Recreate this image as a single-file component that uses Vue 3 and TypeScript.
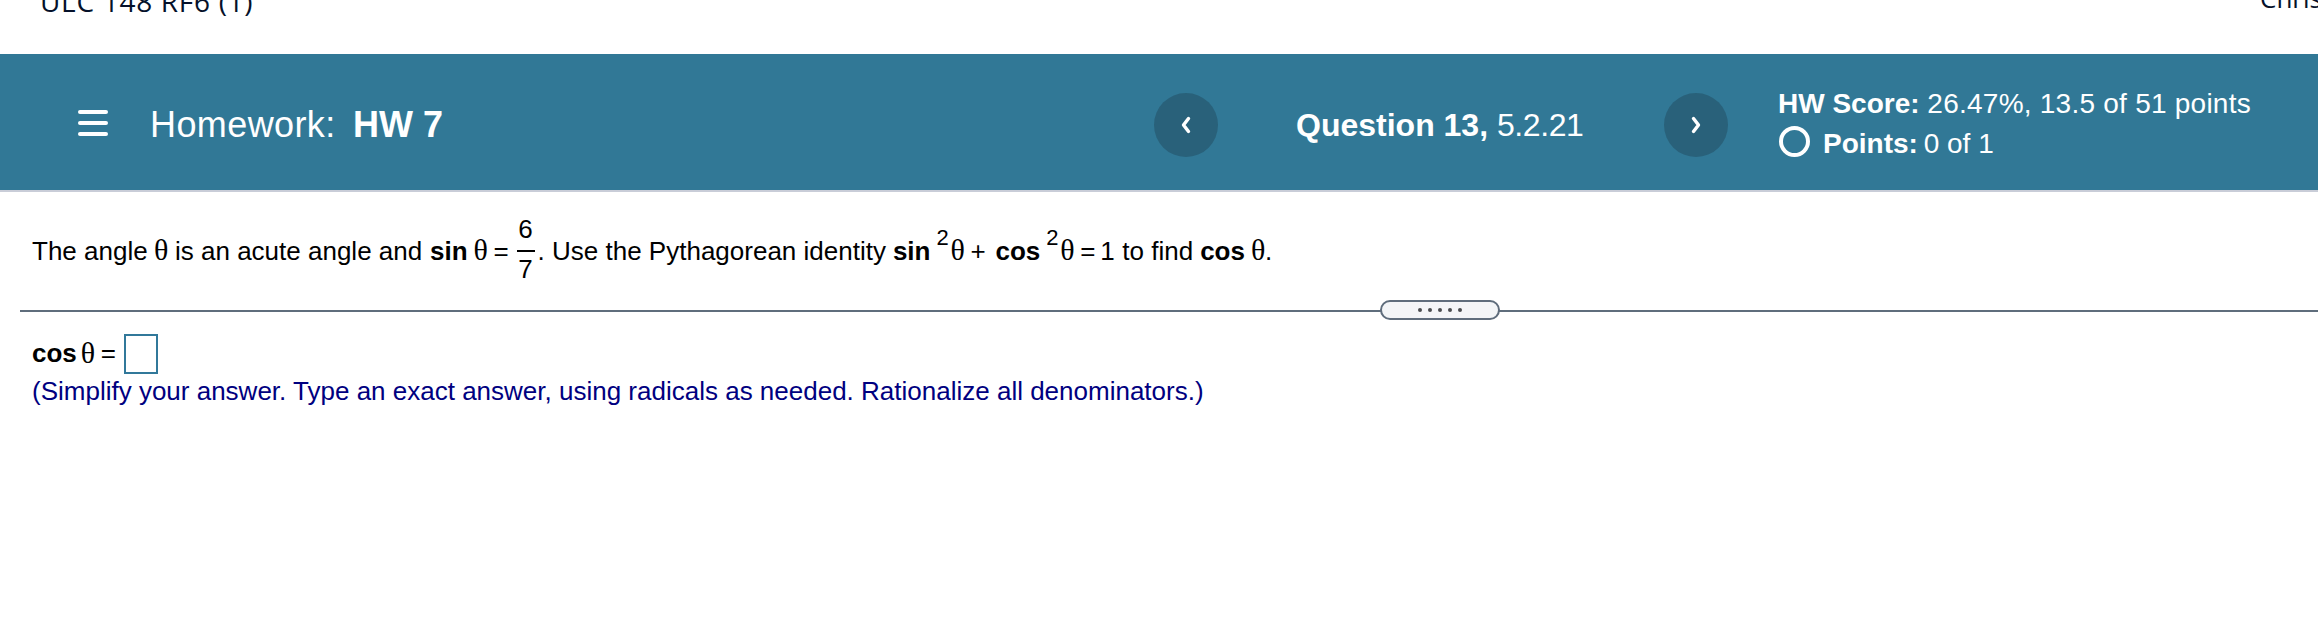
<script setup lang="ts">
import { ref } from "vue";

const courseName = "ULC 148 RF6 (1)";
const userName = "Chris";

const homework = ref({ label: "Homework:", name: "HW 7" });
const question = ref({ number: 13, section: "5.2.21" });
const score = ref({ percent: "26.47%", earned: 13.5, total: 51 });
const points = ref({ earned: 0, total: 1 });

const answer = ref("");
const HANDLE_DOTS = 5;
</script>

<template>
  <div class="page">
    <div class="topbar">
      <span class="course">{{ courseName }}</span>
      <span class="user">{{ userName }}</span>
    </div>

    <header class="header">
      <button class="menu" aria-label="Menu">
        <span class="menuLine"></span>
        <span class="menuLine"></span>
        <span class="menuLine"></span>
      </button>
      <h1 class="title">
        <span class="titleLabel">{{ homework.label }}</span>
        <b>{{ homework.name }}</b>
      </h1>

      <nav class="questionNav">
        <button class="round" aria-label="Previous question">
          <svg width="14" height="20" viewBox="0 0 14 20">
            <path d="M9.5 3.5 L4.5 10 L9.5 16.5" />
          </svg>
        </button>
        <div class="question"><b>Question {{ question.number }},</b> <span class="section">{{ question.section }}</span></div>
        <button class="round" aria-label="Next question">
          <svg width="14" height="20" viewBox="0 0 14 20">
            <path d="M4.5 3.5 L9.5 10 L4.5 16.5" />
          </svg>
        </button>
      </nav>

      <div class="score">
        <div class="scoreLine">
          <b>HW Score:</b> <span class="hwValue">{{ score.percent }}, {{ score.earned }} of {{ score.total }} points</span>
        </div>
        <div class="scoreLine pointsLine">
          <span class="ring"></span>
          <span><b class="pointsLabel">Points:</b> {{ points.earned }} of {{ points.total }}</span>
        </div>
      </div>
    </header>

    <main class="content">
      <div class="prompt">
        <span class="leadText">The angle</span>
        <span class="theta first">θ</span>
        <span class="middleText">is an acute angle and</span>
        <b class="fn">sin</b>
        <span class="theta">θ</span>
        <span class="op">=</span>
        <span class="fraction">
          <span class="numerator">6</span>
          <span class="bar"></span>
          <span class="denominator">7</span>
        </span>
        <span class="useText">. Use the Pythagorean identity</span>
        <b class="fn">sin</b>
        <sup class="power">2</sup>
        <span class="theta squared">θ</span>
        <span class="op">+</span>
        <b class="fn afterPlus">cos</b>
        <sup class="power">2</sup>
        <span class="theta squared">θ</span>
        <span class="op">=</span>
        <span class="one">1</span>
        <span class="findText">to find</span>
        <b class="fn">cos</b>
        <span class="theta last">θ</span>
        <span>.</span>
      </div>

      <div class="divider">
        <div class="handle">
          <i v-for="n in HANDLE_DOTS" :key="n" class="dot"></i>
        </div>
      </div>

      <div class="answer">
        <b>cos</b>
        <span class="theta">θ</span>
        <span class="op">=</span>
        <input v-model="answer" class="answerBox" aria-label="Answer" />
      </div>
      <p class="hint">(Simplify your answer. Type an exact answer, using radicals as needed. Rationalize all denominators.)</p>
    </main>
  </div>
</template>

<style>
body {
  margin: 0;
  background: #fff;
}
</style>

<style scoped>
.page {
  width: 100%;
  height: 644px;
  overflow: hidden;
  font-family: "Liberation Sans", Arial, sans-serif;
  color: #000;
}

button {
  padding: 0;
  border: 0;
  background: none;
}

/* top bar */
.topbar {
  display: flex;
  justify-content: space-between;
  height: 54px;
  font-family: "Open Sans", sans-serif;
  font-weight: 500;
  color: #05112a;
  white-space: nowrap;
}

.course {
  margin: -19px 0 0 40px;
  font-size: 28px;
  line-height: 40px;
  letter-spacing: 0.7px;
}

.user {
  width: 58px;
  margin-top: -22px;
  font-size: 26px;
  line-height: 40px;
  overflow: hidden;
}

/* header */
.header {
  display: flex;
  align-items: center;
  height: 138px;
  padding: 5px 0 0 78px;
  box-sizing: border-box;
  border-bottom: 2px solid #c9cdd8;
  background: #317896;
  color: #fff;
  white-space: nowrap;
}

.menu {
  display: flex;
  flex-direction: column;
  gap: 7px;
  width: 30px;
  margin-bottom: 3px;
}

.menuLine {
  height: 4px;
  border-radius: 2px;
  background: #fff;
}

.title {
  display: flex;
  width: 1004px;
  margin: 0 0 0 42px;
  padding-top: 1px;
  font-size: 36px;
  font-weight: 400;
  line-height: 42px;
}

.titleLabel {
  width: 203px;
  letter-spacing: 0.4px;
}

.questionNav {
  display: flex;
  align-items: center;
  width: 575px;
}

.round {
  display: flex;
  align-items: center;
  justify-content: center;
  width: 64px;
  height: 64px;
  border-radius: 50%;
  background: #29617a;
}

.round path {
  fill: none;
  stroke: #fff;
  stroke-width: 3.4;
  stroke-linecap: round;
  stroke-linejoin: round;
}

.question {
  width: 368px;
  padding-left: 78px;
  font-size: 32px;
  line-height: 40px;
}

.section {
  letter-spacing: -0.4px;
}

.score {
  margin: -1px 0 0 49px;
  font-size: 28px;
  line-height: 40px;
}

.hwValue {
  letter-spacing: 0.24px;
}

.pointsLine {
  display: flex;
  align-items: center;
}

.pointsLabel {
  margin-right: -2px;
}

.ring {
  width: 31px;
  height: 31px;
  margin: 0 13px 5px 1px;
  border: 4px solid #fff;
  border-radius: 50%;
  box-sizing: border-box;
}

/* exercise */
.content {
  font-size: 26px;
  line-height: 30px;
}

.prompt {
  display: flex;
  align-items: center;
  height: 118px;
  padding-left: 32px;
  white-space: nowrap;
}

.leadText {
  width: 115px;
}

.theta {
  width: 14px;
  margin: 0 6px;
  padding-bottom: 3px;
  font-family: "Liberation Serif", serif;
  font-size: 30px;
}

.theta.first {
  margin: 0 7px;
}

.middleText {
  width: 248px;
  margin-right: 7px;
}

.fn {
  padding-bottom: 1px;
}

.op {
  width: 15px;
}

.fraction {
  display: flex;
  flex-direction: column;
  align-items: center;
  width: 18px;
  margin: 0 3px 4px 8px;
}

.fraction span {
  line-height: 38px;
}

.fraction .numerator {
  margin-bottom: 2px;
}

.fraction .denominator {
  margin-top: -2px;
}

.fraction .bar {
  width: 100%;
  height: 2px;
  background: #000;
}

.useText {
  margin-right: 7px;
}

.power {
  width: 12px;
  margin: 0 2px 0 6px;
  padding-bottom: 27px;
  font-size: 22px;
  line-height: 24px;
}

.theta.squared {
  margin-left: 0;
}

.afterPlus {
  margin-left: 10px;
}

.one {
  width: 15px;
  margin-left: 5px;
}

.findText {
  margin: 0 7px 0 7px;
}

.theta.last {
  margin-right: 0;
}

.divider {
  display: flex;
  align-items: center;
  height: 2px;
  margin-left: 20px;
  background: #5f6d7c;
}

.handle {
  display: flex;
  align-items: center;
  justify-content: center;
  gap: 6px;
  flex: none;
  width: 120px;
  height: 20px;
  margin: -2px 0 0 1360px;
  box-sizing: border-box;
  border: 2px solid #5f6d7c;
  border-radius: 10px;
  background: #f3f5f7;
}

.dot {
  width: 4px;
  height: 4px;
  border-radius: 50%;
  background: #4b4d50;
}

.answer {
  display: flex;
  align-items: center;
  height: 40px;
  margin: 22px 0 0 32px;
}

.answer b,
.answer .op {
  padding-bottom: 2px;
}

.answer .theta {
  margin: 0 6px 0 4px;
}

.answerBox {
  width: 34px;
  height: 40px;
  margin: 0 0 0 8px;
  padding: 2px;
  box-sizing: border-box;
  border: 2px solid #31789a;
  background: #fff;
  font-size: 26px;
}

.hint {
  margin: 2px 0 0 32px;
  color: #000080;
  white-space: nowrap;
}
</style>
